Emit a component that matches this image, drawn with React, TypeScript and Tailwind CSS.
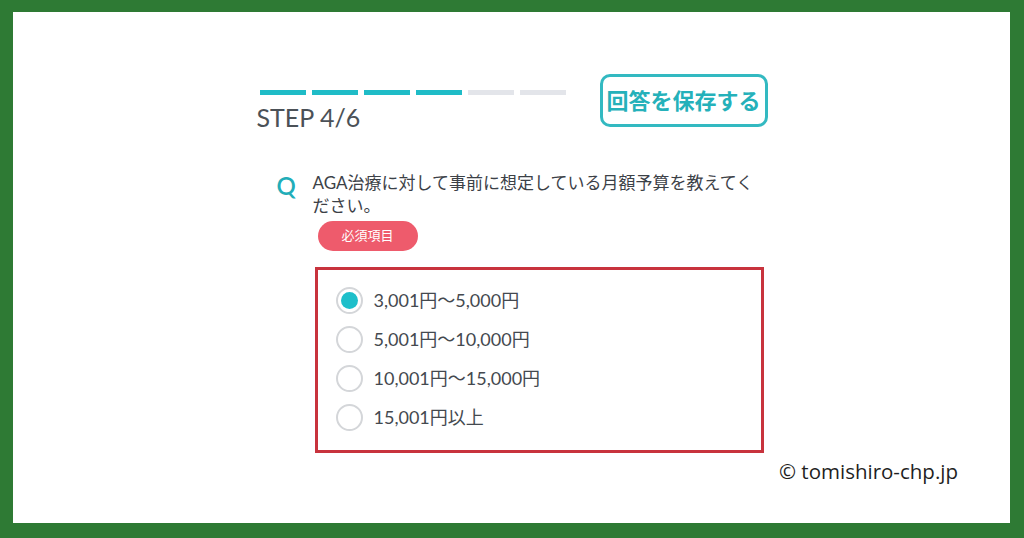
import { useState } from "react";

const OPTIONS = ["3,001円～5,000円", "5,001円～10,000円", "10,001円～15,000円", "15,001円以上"];
const STEPS = 6;
const CURRENT = 4;

export default function App() {
  const [picked, setPicked] = useState(0);

  return (
    <div
      className="h-[538px] w-full bg-[#2e7a34] pb-[15px] pl-[13px] pr-[14px] pt-[12px]"
      style={{ fontFamily: 'Lato, "Noto Sans CJK JP", sans-serif' }}
    >
      <div className="flex h-full flex-col items-center bg-white pt-[62px]">
        <div className="flex w-[508px] flex-col">
          {/* progress + save */}
          <div className="flex items-start justify-between">
            <div className="flex flex-col pl-[2px] pt-[16px]">
              <div className="flex gap-[6px]">
                {Array.from({ length: STEPS }).map((_, i) => (
                  <span
                    key={i}
                    className={`h-[5px] w-[46px] ${i < CURRENT ? "bg-[#1fbcc7]" : "bg-[#e3e5ea]"}`}
                  />
                ))}
              </div>
              <div className="ml-[-3px] mt-[7px] text-[25px] leading-[30px] text-[#4b5157]">STEP 4/6</div>
            </div>
            <button className="mr-[-2px] flex h-[53px] w-[168px] items-center justify-center rounded-[10px] border-[3px] border-[#33b9c1] text-[22px] font-bold text-[#25b1ba]">
              回答を保存する
            </button>
          </div>

          {/* question */}
          <div className="mt-[39px] flex">
            <div className="w-[55px] pl-[19px] pt-[1px] text-[24px] font-semibold leading-[28px] text-[#22adb8]">Q</div>
            <div className="flex flex-col">
              <div className="w-[450px] text-[17px] leading-[23px] text-[#3c4147]">
                AGA治療に対して事前に想定している月額予算を教えてください。
              </div>
              <span className="mt-[4px] ml-[5px] flex h-[30px] w-[100px] items-center justify-center rounded-full bg-[#ee5b6c] text-[13px] text-white">
                必須項目
              </span>
            </div>
          </div>

          {/* options */}
          <div className="ml-[57px] mt-[16px] flex w-[449px] flex-col gap-[12px] border-[3px] border-[#c8333d] pb-[19px] pl-[18px] pt-[17px]">
            {OPTIONS.map((o, i) => (
              <label key={o} className="flex cursor-pointer items-center gap-[11px]" onClick={() => setPicked(i)}>
                <span className="flex h-[27px] w-[27px] items-center justify-center rounded-full border-2 border-[#d4d6d9] bg-white">
                  {picked === i && <span className="h-[17px] w-[17px] rounded-full bg-[#1ebfca]" />}
                </span>
                <span className="text-[18px] leading-[27px] text-[#44494f]">{o}</span>
              </label>
            ))}
          </div>
        </div>

        <div
          className="mr-[52px] mt-[5px] self-end text-[20.5px] leading-[26px] text-[#1f1f1f]"
          style={{ fontFamily: '"Open Sans", sans-serif' }}
        >
          © tomishiro-chp.jp
        </div>
      </div>
    </div>
  );
}
